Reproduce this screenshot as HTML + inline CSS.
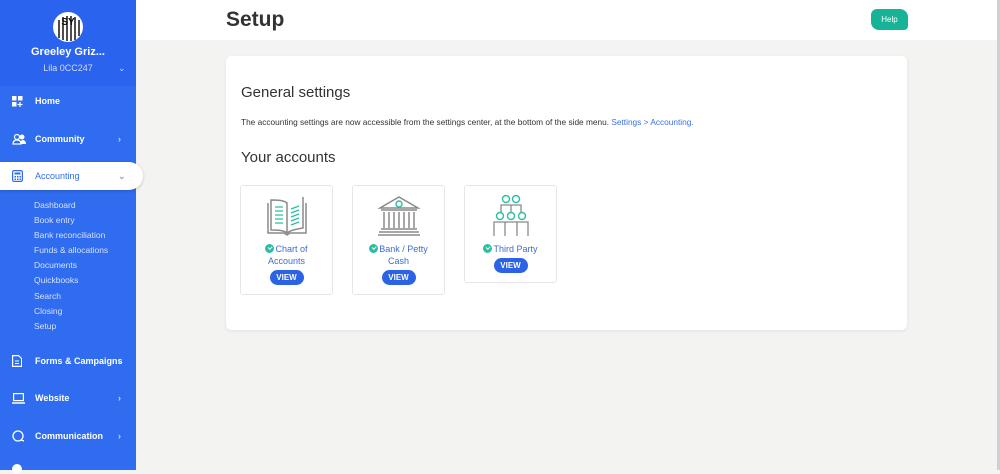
<!DOCTYPE html>
<html><head><meta charset="utf-8"><style>
*{margin:0;padding:0;box-sizing:border-box}
body{width:1000px;height:470px;overflow:hidden;background:#f3f3f2;font-family:"Liberation Sans",sans-serif;position:relative}
.side{position:absolute;left:0;top:0;width:136px;height:470px;background:#2f6cf0;color:#fff}
.top{height:86px;background:#2a63ee;text-align:center}
.logo{position:absolute;left:53px;top:12px;width:30px;height:30px;border-radius:50%;background:#fff;overflow:hidden}
.name{position:absolute;left:0;width:136px;top:46px;font-size:11px;font-weight:bold;text-align:center}
.sub{position:absolute;left:0;width:136px;top:63px;font-size:9px;color:#cfdcff;text-align:center}
.item{position:absolute;left:0;width:136px;height:28px;font-size:9px;font-weight:600;display:flex;align-items:center}
.item svg{position:absolute;left:12px}
.item span{position:absolute;left:35px}
.item i{position:absolute;left:118px;font-style:normal;font-size:9px;color:#c8d7ff}
.active{left:0;width:143px;background:#fff;color:#2f6cf0;border-radius:0 14px 14px 0;box-shadow:0 1px 3px rgba(0,0,0,.2)}
.subm{position:absolute;left:34px;top:198px;font-size:8.5px;color:#d6e1ff;line-height:15.1px}
.header{position:absolute;left:136px;top:0;width:861px;height:40px;background:#fff}
.header h1{position:absolute;left:90px;top:8px;font-size:21px;font-weight:bold;color:#333}
.help{position:absolute;left:871px;top:9px;width:37px;height:21px;background:#17b397;color:#fff;font-size:8px;border-radius:6px 8px 4px 8px;text-align:center;line-height:21px}
.rline{position:absolute;left:997px;top:0;width:3px;height:470px;background:#d0d0d0}
.card{position:absolute;left:226px;top:56px;width:681px;height:274px;background:#fff;border-radius:5px;box-shadow:0 1px 3px rgba(0,0,0,.08)}
.h2{position:absolute;left:15px;font-size:15px;color:#333}
.p{position:absolute;left:15px;top:61px;font-size:8.3px;color:#333}
.p a{color:#3a70e0;text-decoration:none}
.tile{position:absolute;top:129px;width:93px;border:1px solid #e6e6e6;border-radius:3px;text-align:center;font-size:9px;color:#3b6dd6;line-height:12px}
.tile svg.ic{display:block;margin:9px auto 6px}
.btn{display:inline-block;background:#2c63e4;color:#fff;font-weight:bold;font-size:8px;width:34px;height:15px;line-height:15px;border-radius:8px;margin-top:3px}
.chk{display:inline-block;width:9px;height:9px;border:1.2px solid #2bbfa0;background:#2bbfa0;border-radius:50%;vertical-align:-1px;margin-right:1px;position:relative}
.chk:after{content:"";position:absolute;left:1.5px;top:1px;width:3px;height:1.6px;border-left:1.2px solid #fff;border-bottom:1.2px solid #fff;transform:rotate(-45deg)}
</style></head><body>
<div class="side">
 <div class="top"></div>
 <div class="logo"><svg width="30" height="30"><g stroke="#222" stroke-width="1.6"><line x1="6" y1="8" x2="6" y2="26"/><line x1="10" y1="5" x2="10" y2="28"/><line x1="14" y1="4" x2="14" y2="29"/><line x1="18" y1="4" x2="18" y2="29"/><line x1="22" y1="5" x2="22" y2="28"/><line x1="26" y1="8" x2="26" y2="24"/></g><text x="15" y="13" font-size="10" font-weight="bold" text-anchor="middle" fill="#111" font-family="Liberation Sans">SY</text></svg></div>
 <div class="name">Greeley Griz...</div>
 <div class="sub">Lila 0CC247 <span style="position:absolute;left:118px;color:#cfdcff">⌄</span></div>
 <div class="item" style="top:87px"><svg width="11" height="11"><rect x="0" y="0" width="4.5" height="4.5" fill="#fff"/><rect x="6" y="0" width="4.5" height="4.5" fill="#fff"/><rect x="0" y="6" width="4.5" height="4.5" fill="#fff"/><path d="M8 6v5M5.5 8.5h5" stroke="#fff" stroke-width="1.2"/></svg><span>Home</span></div>
 <div class="item" style="top:125px"><svg width="14" height="12"><circle cx="5" cy="4" r="2.5" stroke="#fff" fill="none" stroke-width="1.2"/><path d="M1 11c0-3 2-4 4-4s4 1 4 4z" stroke="#fff" fill="none" stroke-width="1.2"/><circle cx="10" cy="4" r="2.5" fill="#fff"/><path d="M8 11c0-3 2-4 3-4s3 1 3 4z" fill="#fff"/></svg><span>Community</span><i>›</i></div>
 <div class="item active" style="top:162px"><svg width="11" height="12"><rect x=".6" y=".6" width="9.8" height="10.8" rx="1.5" fill="none" stroke="#2f6cf0" stroke-width="1.2"/><rect x="2.5" y="2.5" width="6" height="2" fill="#2f6cf0"/><g fill="#2f6cf0"><rect x="2.5" y="6" width="1.5" height="1.5"/><rect x="5" y="6" width="1.5" height="1.5"/><rect x="7.5" y="6" width="1.5" height="1.5"/><rect x="2.5" y="8.5" width="1.5" height="1.5"/><rect x="5" y="8.5" width="1.5" height="1.5"/><rect x="7.5" y="8.5" width="1.5" height="1.5"/></g></svg><span style="font-weight:normal">Accounting</span><i style="color:#8fa8e0">⌄</i></div>
 <div class="subm">Dashboard<br>Book entry<br>Bank reconciliation<br>Funds &amp; allocations<br>Documents<br>Quickbooks<br>Search<br>Closing<br>Setup</div>
 <div class="item" style="top:347px"><svg width="10" height="12"><path d="M.6.6h6l3 3v7.8H.6z" fill="none" stroke="#fff" stroke-width="1.2"/><path d="M3 6h4M3 8.5h4" stroke="#fff"/></svg><span>Forms &amp; Campaigns</span><i>›</i></div>
 <div class="item" style="top:384px"><svg width="13" height="11"><rect x="1.6" y=".6" width="9.8" height="7" fill="none" stroke="#fff" stroke-width="1.2"/><path d="M0 10h13" stroke="#fff" stroke-width="1.5"/></svg><span>Website</span><i>›</i></div>
 <div class="item" style="top:422px"><svg width="13" height="12"><circle cx="6" cy="6" r="5" fill="none" stroke="#fff" stroke-width="1.3"/><path d="M9 10l3 1" stroke="#fff" stroke-width="1.3"/></svg><span>Communication</span><i>›</i></div>
 <div style="position:absolute;left:12px;top:464px;width:10px;height:10px;border-radius:50%;background:#fff"></div>
</div>
<div class="header"><h1>Setup</h1></div>
<div class="help">Help</div>
<div class="rline"></div>
<div class="card">
 <div class="h2" style="top:28px">General settings</div>
 <div class="p">The accounting settings are now accessible from the settings center, at the bottom of the side menu. <a>Settings &gt; Accounting.</a></div>
 <div class="h2" style="top:93px">Your accounts</div>
 <div class="tile" style="left:14px;height:110px">
  <svg class="ic" width="46" height="42" viewBox="0 0 46 42"><g fill="none" stroke="#8a8a8a" stroke-width="1.5"><path d="M4 8v30h16l3 2 3-2h16V8"/><path d="M7 5v30c6 0 12 0 16 3V8C19 5 13 5 7 5z"/><path d="M39 2v31c-6 1-12 2-16 5"/></g><g stroke="#2bbfa0" stroke-width="1.3"><path d="M11 12h8M11 16h8M11 20h8M11 24h8M11 28h8M27 14l8-3M27 18l8-3M27 22l8-3M27 26l8-3M27 30l8-3"/></g></svg>
  <div><span class="chk"></span>Chart of<br>Accounts</div><div class="btn">VIEW</div>
 </div>
 <div class="tile" style="left:126px;height:110px">
  <svg class="ic" width="46" height="42" viewBox="0 0 46 42"><g fill="none" stroke="#8a8a8a" stroke-width="1.5"><path d="M4 13L23 2l19 11z"/><path d="M5 15h36M8 17v16M13 17v16M18 17v16M23 17v16M28 17v16M33 17v16M38 17v16M5 34h36M3 37h40M2 40h42"/></g><circle cx="23" cy="9" r="3" fill="none" stroke="#2bbfa0" stroke-width="1.4"/></svg>
  <div><span class="chk"></span>Bank / Petty<br>Cash</div><div class="btn">VIEW</div>
 </div>
 <div class="tile" style="left:238px;height:98px">
  <svg class="ic" width="46" height="42" viewBox="0 0 46 42"><g fill="none" stroke="#2bbfa0" stroke-width="1.4"><circle cx="18" cy="4" r="3.5"/><circle cx="28" cy="4" r="3.5"/><circle cx="12" cy="21" r="3.5"/><circle cx="23" cy="21" r="3.5"/><circle cx="34" cy="21" r="3.5"/></g><g fill="none" stroke="#8a8a8a" stroke-width="1.3"><path d="M13 17v-7h10v7M23 17v-7h10v7M6 41V27h11v14M17 41V27h12v14M29 41V27h11v14"/></g></svg>
  <div><span class="chk"></span>Third Party</div><div class="btn">VIEW</div>
 </div>
</div>
</body></html>
